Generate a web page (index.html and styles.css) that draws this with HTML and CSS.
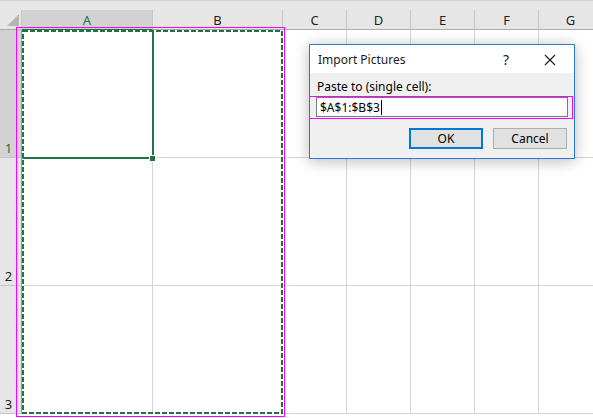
FILE: index.html
```html
<!DOCTYPE html>
<html>
<head>
<meta charset="utf-8">
<link rel="stylesheet" href="styles.css">
</head>
<body>
<div class="sheet">
  <div class="topband"></div>
  <div class="grid">
    <div class="corner">
      <svg width="21" height="18" viewBox="0 0 21 18"><polygon points="7,16 19,16 19,4" fill="#b4b4b4"/></svg>
    </div>
    <div class="colhead sel">A</div>
    <div class="colhead">B</div>
    <div class="colhead">C</div>
    <div class="colhead">D</div>
    <div class="colhead">E</div>
    <div class="colhead">F</div>
    <div class="colhead">G</div>

    <div class="rowhead sel">1</div>
    <div class="cell"></div><div class="cell"></div><div class="cell"></div><div class="cell"></div><div class="cell"></div><div class="cell"></div><div class="cell"></div>

    <div class="rowhead">2</div>
    <div class="cell"></div><div class="cell"></div><div class="cell"></div><div class="cell"></div><div class="cell"></div><div class="cell"></div><div class="cell"></div>

    <div class="rowhead">3</div>
    <div class="cell"></div><div class="cell"></div><div class="cell"></div><div class="cell"></div><div class="cell"></div><div class="cell"></div><div class="cell"></div>
  </div>
</div>

<svg class="ants" width="262" height="385" viewBox="0 0 262 385">
  <rect x="1" y="1" width="259" height="382" fill="none" stroke="#ffffff" stroke-width="2"/>
  <rect x="1" y="1" width="259" height="382" fill="none" stroke="#217346" stroke-width="2" stroke-dasharray="5 2"/>
</svg>
<div class="selection"></div>
<div class="handle"></div>
<div class="magenta-range"></div>

<div class="dialog">
  <div class="titlebar">
    <span class="title">Import Pictures</span>
    <span class="help">?</span>
    <svg class="close" width="12" height="12" viewBox="0 0 12 12"><path d="M1 1 L11 11 M11 1 L1 11" stroke="#1a1a1a" stroke-width="1.1" fill="none"/></svg>
  </div>
  <div class="body">
    <div class="label">Paste to (single cell):</div>
    <div class="input">$A$1:$B$3<span class="caret"></span></div>
    <div class="buttons">
      <div class="btn default">OK</div>
      <div class="btn">Cancel</div>
    </div>
  </div>
</div>
<div class="magenta-input"></div>
</body>
</html>
```
FILE: styles.css
```css
html, body {
  margin: 0;
  padding: 0;
  background: #ffffff;
  overflow: hidden;
  width: 593px;
  height: 418px;
  font-family: "Noto Sans", "Open Sans", sans-serif;
}
.sheet {
  width: 593px;
  height: 418px;
  overflow: hidden;
}
.topband {
  height: 10px;
  width: 640px;
  background: #e6e6e6;
  border-top: 1px solid #d0d0d0;
  box-sizing: border-box;
}
.grid {
  display: grid;
  grid-template-columns: 22px 131px 130px repeat(5, 64px);
  grid-template-rows: 20px repeat(3, 128px);
  width: 603px;
}
.corner {
  background: #e6e6e6;
  border-right: 1px solid #c6c6c6;
  border-bottom: 1px solid #ababab;
  box-sizing: border-box;
  display: flex;
  align-items: flex-start;
}
.corner svg { display: block; }
.colhead {
  background: #e6e6e6;
  border-right: 1px solid #c6c6c6;
  border-bottom: 1px solid #ababab;
  box-sizing: border-box;
  display: flex;
  justify-content: center;
  align-items: center;
  font-size: 13px;
  color: #1e1e1e;
  padding-top: 1px;
}
.colhead.sel {
  background: #d2d2d2;
  color: #217346;
  border-bottom: 1px solid #217346;
}
.rowhead {
  background: #e6e6e6;
  border-right: 1px solid #9d9d9d;
  border-bottom: 1px solid #c6c6c6;
  box-sizing: border-box;
  display: flex;
  align-items: flex-end;
  justify-content: center;
  padding: 0 4px 0 0;
  font-size: 13px;
  color: #1e1e1e;
  line-height: 18px;
}
.rowhead.sel {
  background: #d2d2d2;
  color: #217346;
}
.cell {
  border-right: 1px solid #d4d4d4;
  border-bottom: 1px solid #d4d4d4;
  box-sizing: border-box;
}
.ants {
  position: absolute;
  left: 22px;
  top: 30px;
}
.selection {
  position: absolute;
  left: 22px;
  top: 30px;
  width: 132px;
  height: 129px;
  border: 2px solid #217346;
  border-top-color: transparent;
  border-left-color: transparent;
  box-sizing: border-box;
}
.handle {
  position: absolute;
  left: 149px;
  top: 155px;
  width: 5px;
  height: 5px;
  background: #217346;
  border: 1px solid #ffffff;
}
.magenta-range {
  position: absolute;
  left: 16px;
  top: 27px;
  width: 269px;
  height: 390px;
  border: 1px solid #ff00ff;
  box-sizing: border-box;
}
.dialog {
  position: absolute;
  left: 309px;
  top: 44px;
  width: 266px;
  height: 115px;
  box-sizing: border-box;
  border: 1px solid #2b79d6;
  background: #f0f0f0;
  box-shadow: 0 2px 14px rgba(0, 0, 0, 0.28);
  display: flex;
  flex-direction: column;
  font-size: 12px;
  color: #000;
}
.titlebar {
  height: 28px;
  background: #ffffff;
  display: flex;
  align-items: center;
  padding-left: 8px;
  padding-top: 1px;
  box-sizing: border-box;
}
.title {
  flex: 1;
  font-size: 12px;
  color: #1a1a1a;
}
.help {
  font-size: 14px;
  color: #1a1a1a;
  margin-right: 35px;
}
.close {
  margin-right: 18px;
  display: block;
}
.body {
  padding: 6px 6px 9px 6px;
  display: flex;
  flex-direction: column;
}
.label {
  height: 16px;
  line-height: 16px;
  font-size: 12px;
  padding-left: 1px;
}
.input {
  margin-top: 2px;
  height: 20px;
  box-sizing: border-box;
  border: 1px solid #7a7a7a;
  background: #ffffff;
  display: flex;
  align-items: center;
  padding-left: 3px;
  font-size: 12px;
}
.caret {
  display: inline-block;
  width: 1px;
  height: 15px;
  background: #000;
  margin-left: 1px;
}
.buttons {
  margin-top: 11px;
  display: flex;
  justify-content: flex-end;
  gap: 10px;
  padding-right: 1px;
}
.btn {
  width: 74px;
  height: 21px;
  box-sizing: border-box;
  background: #e1e1e1;
  border: 1px solid #adadad;
  display: flex;
  align-items: center;
  justify-content: center;
  font-size: 12px;
}
.btn.default {
  border: 2px solid #0078d7;
}
.magenta-input {
  position: absolute;
  left: 309px;
  top: 96px;
  width: 264px;
  height: 23px;
  border: 1px solid #ff00ff;
  box-sizing: border-box;
}
```
